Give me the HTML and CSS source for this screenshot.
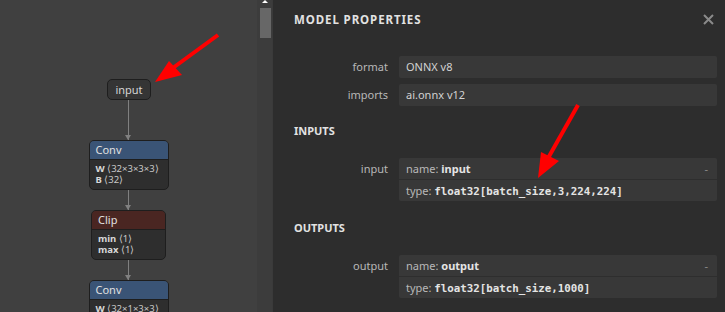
FILE: index.html
```html
<!DOCTYPE html>
<html lang="en">

<head>
    <meta charset="UTF-8">
    <meta name="viewport" content="width=device-width, initial-scale=1.0">
    <title>Model Properties</title>
    <link rel="stylesheet" href="styles.css">
</head>

<body>
    <div class="app">
        <div class="graph">
            <div class="nodes">
                <div class="node node-input">input</div>
                <div class="edge edge-long"></div>
                <div class="node op conv">
                    <div class="op-head">Conv</div>
                    <div class="op-body">
                        <div><b>W</b> ⟨32×3×3×3⟩</div>
                        <div><b>B</b> ⟨32⟩</div>
                    </div>
                </div>
                <div class="edge"></div>
                <div class="node op clip">
                    <div class="op-head">Clip</div>
                    <div class="op-body">
                        <div><b>min</b> ⟨1⟩</div>
                        <div><b>max</b> ⟨1⟩</div>
                    </div>
                </div>
                <div class="edge"></div>
                <div class="node op conv">
                    <div class="op-head">Conv</div>
                    <div class="op-body">
                        <div><b>W</b> ⟨32×1×3×3⟩</div>
                    </div>
                </div>
            </div>
            <div class="scrollbar">
                <span class="scroll-up"></span>
                <span class="thumb"></span>
            </div>
        </div>

        <div class="panel">
            <div class="panel-title">
                <span>Model Properties</span>
                <svg class="close" width="11" height="11" viewBox="0 0 11 11">
                    <path d="M1 1L10 10M10 1L1 10" stroke="#8a8a8a" stroke-width="2" />
                </svg>
            </div>

            <div class="prop-row">
                <div class="prop-name">format</div>
                <div class="prop-value">ONNX v8</div>
            </div>
            <div class="prop-row">
                <div class="prop-name">imports</div>
                <div class="prop-value">ai.onnx v12</div>
            </div>

            <div class="section">Inputs</div>
            <div class="prop-row group">
                <div class="prop-name">input</div>
                <div class="prop-value multi">
                    <div class="line">name: <b>input</b><span class="toggle">-</span></div>
                    <div class="line">type: <code>float32[batch_size,3,224,224]</code></div>
                </div>
            </div>

            <div class="section">Outputs</div>
            <div class="prop-row group">
                <div class="prop-name">output</div>
                <div class="prop-value multi">
                    <div class="line">name: <b>output</b><span class="toggle">-</span></div>
                    <div class="line">type: <code>float32[batch_size,1000]</code></div>
                </div>
            </div>
        </div>

        <!-- red annotation arrows drawn over the screenshot -->
        <svg class="annotations" width="725" height="312" viewBox="0 0 725 312">
            <line x1="218" y1="35" x2="166" y2="73" stroke="#ff0000" stroke-width="4" />
            <polygon points="155,82 169,61 182,75" fill="#ff0000" />
            <line x1="578" y1="105" x2="547" y2="160" stroke="#ff0000" stroke-width="4" />
            <polygon points="538,178 541,152 559,161" fill="#ff0000" />
        </svg>
    </div>
</body>

</html>
```

FILE: styles.css
```css
body {
    margin: 0;
    background: #2d2d2d;
    font-family: "Noto Sans", "Open Sans", sans-serif;
    overflow: hidden;
}

.app {
    position: relative;
    display: flex;
    width: 725px;
    height: 312px;
    overflow: hidden;
}

/* graph canvas */
.graph {
    width: 272px;
    flex: none;
    display: flex;
    background: #404040;
}

.nodes {
    flex: 1;
    display: flex;
    flex-direction: column;
    align-items: center;
    padding-top: 79px;
}

.node {
    flex: none;
    box-sizing: border-box;
    border: 1px solid #1e1e1e;
    border-radius: 5px;
    color: #d6d6d6;
}

.node-input {
    height: 21px;
    padding: 0 7px;
    background: #353535;
    font-size: 11px;
    line-height: 19px;
    margin-left: 1px;
}

.edge {
    flex: none;
    position: relative;
    width: 1px;
    height: 20px;
    background: #808080;
}

.edge-long {
    height: 40px;
}

.edge::after {
    content: "";
    position: absolute;
    left: -3px;
    bottom: 0;
    border-left: 3.5px solid transparent;
    border-right: 3.5px solid transparent;
    border-top: 5px solid #808080;
}

.op {
    height: 50px;
    overflow: hidden;
    background: #2e2e2e;
}

.conv {
    width: 80px;
}

.clip {
    width: 75px;
}

.op-head {
    height: 18px;
    padding-left: 6px;
    font-size: 11px;
    line-height: 18px;
    color: #e0e0e0;
    border-bottom: 1px solid #1e1e1e;
}

.conv .op-head {
    background: #3a5476;
}

.clip .op-head {
    background: #4a2622;
}

.op-body {
    padding: 3px 6px 4px;
    font-size: 9.5px;
    line-height: 11px;
    color: #c8c8c8;
    white-space: nowrap;
}

.op-body b {
    color: #d8d8d8;
}

.scrollbar {
    position: relative;
    width: 15px;
    background: #3c3c3c;
}

.scroll-up {
    position: absolute;
    left: 5px;
    top: 0;
    border-left: 3px solid transparent;
    border-right: 3px solid transparent;
    border-bottom: 3px solid #ffffff;
}

.thumb {
    position: absolute;
    left: 3px;
    top: 8px;
    width: 11px;
    height: 30px;
    background: #676767;
}

/* properties sidebar */
.panel {
    flex: 1;
    box-sizing: border-box;
    padding: 10px 8px 0 21px;
    background: #2d2d2d;
    border-left: 1px solid #3a3a3a;
    color: #b8b8b8;
}

.panel-title {
    display: flex;
    justify-content: space-between;
    align-items: center;
    height: 18px;
    margin-bottom: 28px;
    font-size: 11.5px;
    font-weight: bold;
    letter-spacing: 0.9px;
    text-transform: uppercase;
    color: #e2e2e2;
}

.close {
    margin-right: 3px;
}

.prop-row {
    display: flex;
    margin-bottom: 6px;
    font-size: 11px;
}

.prop-row.group {
    margin-bottom: 19px;
}

.prop-name {
    width: 94px;
    flex: none;
    margin-right: 11px;
    text-align: right;
    line-height: 22px;
}

.prop-value {
    flex: 1;
    min-height: 22px;
    padding-left: 7px;
    border-radius: 2px;
    background: #383838;
    color: #d2d2d2;
    line-height: 22px;
}

.prop-value.multi {
    padding: 0;
}

.line {
    position: relative;
    height: 21px;
    padding-left: 7px;
    line-height: 21px;
    color: #b8b8b8;
}

.line + .line {
    border-top: 1px solid #2e2e2e;
}

.line b {
    color: #e4e4e4;
}

.line code {
    font-family: "DejaVu Sans Mono", monospace;
    font-size: 10.8px;
    font-weight: bold;
    color: #e4e4e4;
}

.toggle {
    position: absolute;
    right: 9px;
    top: 0;
    color: #8a8a8a;
}

.section {
    margin: 17px 0 20px;
    font-size: 11px;
    font-weight: bold;
    color: #e2e2e2;
    text-transform: uppercase;
}

.annotations {
    position: absolute;
    left: 0;
    top: 0;
    pointer-events: none;
}
```
